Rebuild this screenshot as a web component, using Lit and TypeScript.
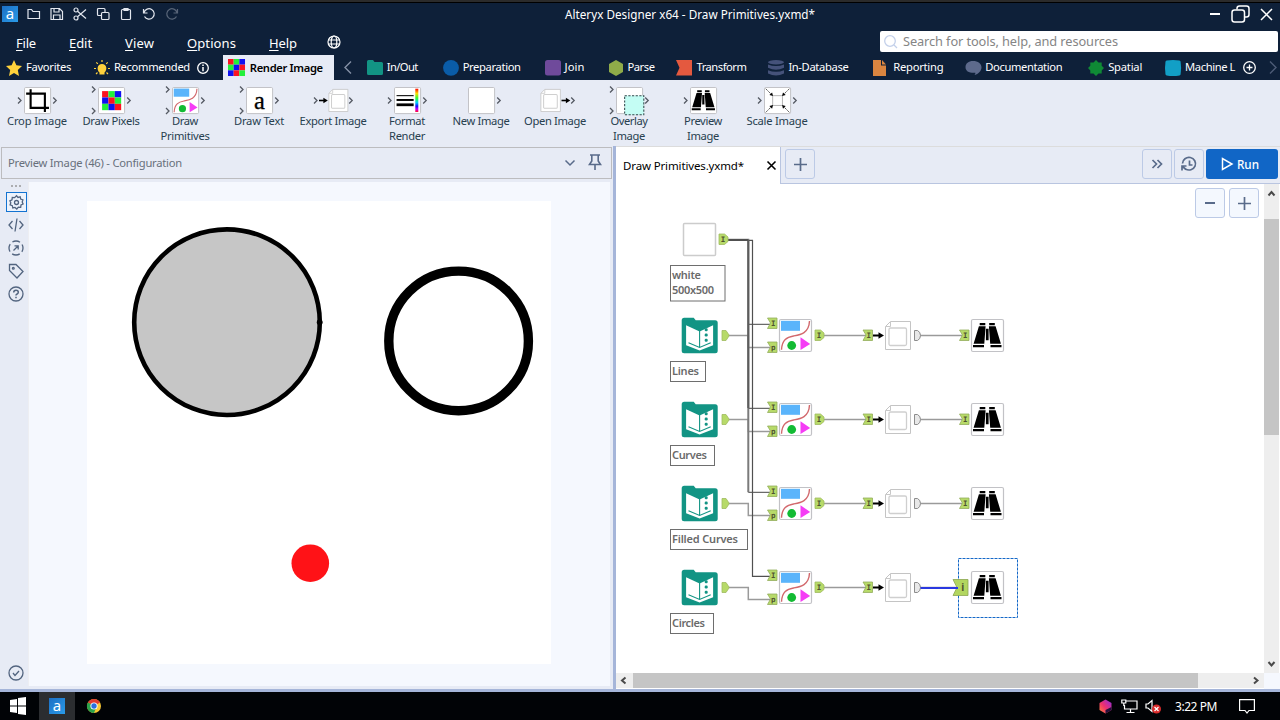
import { LitElement, html, svg, css } from "lit";
import { customElement, property } from "lit/decorators.js";

/** One line of text tracked out or in to a nominal width. */
@customElement("tracked-text")
export class TrackedText extends LitElement {
  @property({ type: Number }) w = 0;
  @property() text = "";
  @property({ type: Boolean }) mnemonic = false;
  static styles = css`
    :host { display: inline-block; white-space: pre; flex: none; }
    u { text-underline-offset: 2px; text-decoration-thickness: 1px; }
  `;
  render() {
    return html`<span>${this.mnemonic
      ? html`<u>${this.text[0]}</u>${this.text.slice(1)}`
      : this.text}</span>`;
  }
  updated() {
    const span = this.renderRoot.querySelector("span") as HTMLElement;
    span.style.letterSpacing = "0";
    const natural = span.getBoundingClientRect().width;
    span.style.letterSpacing = `${(this.w - natural) / this.text.length}px`;
  }
}

const t = (text: string, w: number, mnemonic = false) =>
  html`<tracked-text .text=${text} .w=${w} ?mnemonic=${mnemonic}></tracked-text>`;

// ---- Tool glyphs, drawn in a 33 x 33 frame ----
const frame = svg`<rect x=".5" y=".5" width="32" height="32" rx="1.5" fill="#fff" stroke="#c2c2c6" stroke-width="1.2"/>`;
const binoculars = svg`${frame}
  <path d="M8.7 3.900h5.600v2.300h-5.600zM18.200 3.900h5.600v2.300h-5.600zM7.900 7.300h6.700L13.300 24.800H2.600zM24.600 7.300h-6.700L19.200 24.800h10.700zM2 26h11v2.300H2zM19.500 26h11v2.300h-11zM14.900 9.700h2.700v11.600h-2.700z" fill="#000"/>`;
const primitives = svg`${frame}
  <rect x="2" y="1.8" width="19" height="10" fill="#5ab4fb"/>
  <path d="M2.500 30.800C3 20.500 8 18.200 14.500 17S30 14.500 30.500 2" fill="none" stroke="#d2686c" stroke-width="1.4"/>
  <circle cx="12.700" cy="26.500" r="4.400" fill="#12bb33"/><path d="M21.500 18.200l9.700 6.800-9.700 6z" fill="#f53cf5"/>`;
const pixelCells = ["#fa1420", "#22f03a", "#1010f0", "#1010f0", "#fa1420", "#22f03a", "#22f03a", "#1010f0", "#fa1420"];
const tabCells = ["#fa1420", "#22f03a", "#1010f0", "#22f03a", "#1010f0", "#fa1420", "#1010f0", "#fa1420", "#22f03a"];
const pixels = (x: number, y: number, s: number, cells = pixelCells) =>
  cells.map((c, i) => svg`<rect x=${x + (i % 3) * s} y=${y + Math.floor(i / 3) * s} width=${s} height=${s} fill=${c}/>`);
const page = svg`<path d="M5.500 .5H25.500V28.500H.5V5.500Z" fill="#fff" stroke="#c4c4c4"/>
  <path d="M.8 5.500H5.500V.8" fill="none" stroke="#c8c8c8"/>
  <rect x="4" y="7" width="17.500" height="17.500" rx="1.500" fill="#fff" stroke="#cfcfcf" stroke-width="1.300"/>`;
const arrow = svg`<path d="M0 0H6.500" stroke="#000" stroke-width="2"/><path d="M5.500-3.300L11 0 5.500 3.300z" fill="#000"/>`;
const book = svg`<path d="M2.500 0H12l2 2.500H33.500q2.500 0 2.500 2.500V33q0 2.500-2.500 2.500H2.500Q0 35.500 0 33V2.500Q0 0 2.500 0z" fill="#129484"/>
  <path d="M4.400 7.500L17.900 13.800 31.400 7.500V27.500L17.900 32.700 4.400 27.500z" fill="#fff"/>
  <path d="M17.900 13.300V29.500M6.800 25L17.900 29.800 29 25" stroke="#129484" stroke-width="1.100" fill="none"/>
  <g fill="#129484"><rect x="23" y="10.500" width="3" height="3" rx="1.200"/><rect x="23" y="15.800" width="3" height="3" rx="1.200"/><rect x="23" y="21" width="3" height="3" rx="1.200"/></g>`;

const glyphs: Record<string, unknown> = {
  crop: svg`${frame}<path d="M8 2.500V25.500H30.500M2.500 8H25.500V30.500" fill="none" stroke="#000" stroke-width="2.600"/>`,
  pixels: svg`${frame}${pixels(4.900, 4.900, 7.800)}`,
  primitives,
  text: svg`${frame}<text x="16.300" y="26.300" text-anchor="middle" class="glyph-a">a</text>`,
  format: svg`${frame}<defs><linearGradient id="spectrum" x1="0" y1="0" x2="0" y2="1"><stop offset="0" stop-color="#f00"/><stop offset=".2" stop-color="#fd0"/><stop offset=".4" stop-color="#3f3"/><stop offset=".6" stop-color="#0cf"/><stop offset=".75" stop-color="#11f"/><stop offset=".88" stop-color="#c0f"/><stop offset="1" stop-color="#f02"/></linearGradient></defs>
    <path d="M3 10.500H24" stroke="#000" stroke-width="1.300"/><path d="M3 15.800H24" stroke="#000" stroke-width="2.400"/><path d="M3 21.700H24" stroke="#000" stroke-width="3.400"/><rect x="26" y="2" width="3.700" height="28.500" fill="url(#spectrum)"/>`,
  blank: frame,
  overlay: svg`${frame}<rect x="10.500" y="10.500" width="23.500" height="23.500" fill="#c4fdf4" stroke="#33484c" stroke-width="1.300" stroke-dasharray="2.700 1.800"/>`,
  binoculars,
  scale: svg`${frame}<rect x="10.500" y="10.500" width="12" height="12" fill="none" stroke="#b5b5b5" stroke-width="1.200"/>
    <path d="M2 2l7 7M31 2l-7 7M2 31l7-7M31 31l-7-7" stroke="#444" stroke-width="1.200" stroke-dasharray="2 1"/>
    <path d="M11 11L6.500 9.800 9.800 6.500zM22 11l4.500-1.200-3.300-3.300zM11 22l-4.500 1.200 3.300 3.300zM22 22l4.500 1.200-3.300 3.300z" fill="#000"/>`,
};

const chev = (x: number, y: number) => svg`<path d="M${x} ${y - 3}l3 3-3 3" fill="none" stroke="#555a63" stroke-width="1.300"/>`;

interface Tool { glyph: string; ins: number; outs: number; lines: [string, number][]; }
const tools: Tool[] = [
  { glyph: "crop", ins: 1, outs: 1, lines: [["Crop Image", 60]] },
  { glyph: "pixels", ins: 2, outs: 1, lines: [["Draw Pixels", 57]] },
  { glyph: "primitives", ins: 2, outs: 1, lines: [["Draw", 26], ["Primitives", 49]] },
  { glyph: "text", ins: 2, outs: 1, lines: [["Draw Text", 50]] },
  { glyph: "export", ins: 1, outs: 1, lines: [["Export Image", 67]] },
  { glyph: "format", ins: 1, outs: 1, lines: [["Format", 36], ["Render", 36]] },
  { glyph: "blank", ins: 0, outs: 1, lines: [["New Image", 57]] },
  { glyph: "open", ins: 0, outs: 1, lines: [["Open Image", 62]] },
  { glyph: "overlay", ins: 2, outs: 1, lines: [["Overlay", 37], ["Image", 32]] },
  { glyph: "binoculars", ins: 1, outs: 0, lines: [["Preview", 38], ["Image", 32]] },
  { glyph: "scale", ins: 1, outs: 1, lines: [["Scale Image", 61]] },
];

const toolArt = (tool: Tool) => {
  let body;
  if (tool.glyph === "export") {
    body = svg`<g transform="translate(23 20.500) scale(.8)">${arrow}</g><g transform="translate(32.500 9) scale(.76 .79)">${page}</g>`;
  } else if (tool.glyph === "open") {
    body = svg`<g transform="translate(22.500 9) scale(.78 .79)">${page}</g><g transform="translate(43.500 20.500) scale(.8)">${arrow}</g>`;
  } else {
    body = svg`<g transform="translate(24.100 7.100) scale(.815)">${glyphs[tool.glyph]}</g>`;
  }
  return html`<svg width="74" height="34" viewBox="0 0 74 34">
    ${body}
    ${tool.ins === 1 ? chev(18, 20.500) : ""}
    ${tool.ins === 2 ? svg`${chev(18, 9.500)}${chev(18, 31)}` : ""}
    ${tool.outs ? chev(53.200, 20.500) : ""}
  </svg>`;
};

// ---- Category tabs: icon, label width, total cell width ----
interface Cat { id: string; label: string; w: number; cell: number; icon: unknown; }
const cats: Cat[] = [
  { id: "io", label: "In/Out", w: 31, cell: 76, icon: svg`<path d="M0 1.500Q0 0 1.500 0H6l1.500 2H14.500Q16 2 16 3.500V13.500Q16 15 14.500 15H1.500Q0 15 0 13.500z" fill="#129484"/>` },
  { id: "prep", label: "Preparation", w: 58, cell: 102, icon: svg`<circle cx="8" cy="7.800" r="7.900" fill="#0a5ca8"/>` },
  { id: "join", label: "Join", w: 20, cell: 63, icon: svg`<rect width="16" height="15.500" rx="2.500" fill="#6f4a9b"/>` },
  { id: "parse", label: "Parse", w: 27, cell: 69, icon: svg`<path d="M8 0l7 4v8l-7 4-7-4V4z" fill="#8fab49"/>` },
  { id: "transform", label: "Transform", w: 50, cell: 92, icon: svg`<path d="M0 0H16V15.500H0L3.500 7.700z" fill="#e4593f"/>` },
  { id: "indb", label: "In-Database", w: 60, cell: 105, icon: svg`<g fill="#45527a"><ellipse cx="8" cy="2.200" rx="8" ry="2.200"/><path d="M0 4.500q8 3 16 0v3.300q-8 4-16 0zM0 10.300q8 3 16 0v3.200q-8 4-16 0z"/></g>` },
  { id: "rep", label: "Reporting", w: 50, cell: 92, icon: svg`<path d="M0 0H8V5.500H13V16H0z" fill="#da8540"/><path d="M9 0l4 4.500H9z" fill="#da8540"/>` },
  { id: "doc", label: "Documentation", w: 77, cell: 123, icon: svg`<path d="M8 1c5 0 8.500 2.500 8.500 6.300 0 3.200-2.300 6.400-7 7.700.8-.8 1-1.600.8-2.200C4 13.200.500 11 .5 7.200.5 3.500 3.500 1 8 1z" fill="#5d6a8c"/>` },
  { id: "spatial", label: "Spatial", w: 34, cell: 77, icon: svg`<path d="M8 0l2.500 2.500h3.200v3.200L16 8l-2.300 2.500v3h-3.200L8 16l-2.500-2.500H2.300v-3L0 8l2.300-2.300V2.500h3.200z" fill="#0f8a35"/>` },
  { id: "ml", label: "Machine L", w: 50, cell: 78, icon: svg`<path d="M1.500.5Q8-.6 14.500.5L15.600 1.500Q16.600 8 15.600 14.500L14.500 15.500Q8 16.600 1.500 15.500L.5 14.500Q-.5 8 .5 1.500z" fill="#129fc6"/>` },
];

const quick = [
  svg`<path d="M2 3.500h3.500l1.500 2h6.500v7H2z"/>`,
  svg`<path d="M2 2.500h8.500l3 3V13.500H2zM5 2.500v3.500h5V2.500M4.500 13.500V9h6.500v4.500"/>`,
  svg`<circle cx="4" cy="4" r="2"/><circle cx="4" cy="12" r="2"/><path d="M5.500 5.300L14 12.500M5.500 10.700L14 3.500"/>`,
  svg`<rect x="2.500" y="2.500" width="7.500" height="7" rx="1"/><rect x="6.500" y="6.500" width="7.500" height="7" rx="1" fill="#0e2039"/>`,
  svg`<rect x="3.500" y="3.500" width="9" height="10" rx="1"/><path d="M6 4.500V2.500h4v2z"/>`,
  svg`<path d="M2.500 3v4h4M3 6.500a5.200 5.200 0 1 1 .5 4"/>`,
  svg`<path d="M13.500 3v4h-4M13 6.500a5.200 5.200 0 1 0-.5 4" opacity=".35"/>`,
];

// ---- Workflow canvas ----
const rows = [
  { y: 335, name: "Lines", w: 35, tw: 27 },
  { y: 419, name: "Curves", w: 44, tw: 35 },
  { y: 503, name: "Filled Curves", w: 77, tw: 66 },
  { y: 587, name: "Circles", w: 43, tw: 33 },
];
const inPort = (x: number, y: number, label: string) => svg`<g transform="translate(${x} ${y})">
  <path d="M.5-5H10V5.500H.5L3.500 0z" fill="#b7da69" stroke="#93ad5c" stroke-width=".8"/><text x="6.300" y="3.200" class="port">${label}</text></g>`;
const outPort = (x: number, y: number, label: string) => svg`<g transform="translate(${x} ${y})">
  <path d="M.5-5H6L9.500-2V2.500L6 5.500H.5z" fill="#b7da69" stroke="#a0bb60" stroke-width=".8"/><text x="4.500" y="3" class="port">${label}</text></g>`;
const note = (x: number, y: number, w: number, h: number, lines: [string, number][]) => svg`
  <rect x=${x} y=${y} width=${w} height=${h} fill="#fff" stroke="#6e6e6e"/>
  ${lines.map(([s, tw], i) => svg`<text x=${x + 1.500} y=${y + 13.300 + i * 15} textLength=${tw} class="note">${s}</text>`)}`;

const workflow = () => svg`
  <g fill="none" stroke="#9a9a9a" stroke-width="1.500">
    ${rows.map(r => svg`<path d="M728 ${r.y + .5}H748.300V${r.y + 12.500}H770M824 ${r.y + .5}H866M920 ${r.y + .5}H962"/>`)}
  </g>
  <g fill="none" stroke="#6a6a6a" stroke-width="1.300">
    <path d="M728 239.700H748.300V492.300" stroke="#7b7b7b" stroke-width="2"/>
    <path d="M748.300 324.300H770M748.300 408.300H770M748.300 492.300H770"/>
    <path d="M729 240.300H752.500V576.300H770" stroke="#505050" stroke-width="1.200"/>
    <path d="M748.300 240V408" stroke="#5c5c5c" stroke-width="2"/><path d="M728 240H748" stroke="#505050" stroke-width="2"/>
  </g>
  <rect x="683.500" y="223.500" width="32" height="32" rx="1" fill="#fff" stroke="#ccc" stroke-width="1.500"/>
  ${outPort(718.500, 239, "I")}
  ${note(670.500, 265.500, 54.500, 35.500, [["white", 29], ["500x500", 42]])}
  ${rows.map((r, i) => svg`
    <g transform="translate(681.700 ${r.y - 17.300})">${book}</g>
    <path d="M722 ${r.y - 4.500}H726L729 ${r.y}V${r.y + 1}L726 ${r.y + 5.500}H722z" fill="#b7da69" stroke="#a0bb60" stroke-width=".8"/>
    ${note(670.500, r.y + 26.500, r.w, 20, [[r.name, r.tw]])}
    ${inPort(767, r.y - 12, "I")}${inPort(767, r.y + 12, "p")}
    <g transform="translate(779 ${r.y - 16})">${primitives}</g>
    ${outPort(814.500, r.y, "I")}${inPort(862.500, r.y, "I")}
    <g transform="translate(873 ${r.y + .5})">${arrow}</g>
    <g transform="translate(885 ${r.y - 14})">${page}</g>
    <path d="M914.500 ${r.y - 4.500}H917.500Q920.500 ${r.y - 3} 920.500 ${r.y + .5}T917.500 ${r.y + 5.500}H914.500z" fill="#e8e8e8" stroke="#8c8c8c"/>
    ${i === 3
      ? svg`<rect x="958.500" y="558.500" width="59" height="59" fill="none" stroke="#1468c8" stroke-dasharray="3 1"/>
        <g transform="translate(953 ${r.y + .5})"><path d="M0-8H15V8H0L4 0z" fill="#b2d65f" stroke="#8ca650" stroke-width=".8"/><text x="9.700" y="3.800" class="port big">i</text></g>
        <path d="M920.500 588H958" stroke="#2a38e0" stroke-width="2"/>`
      : inPort(959, r.y, "I")}
    <g transform="translate(971 ${r.y - 16})">${binoculars}</g>`)}`;

@customElement("app-root")
export class AppRoot extends LitElement {
  static styles = css`
    :host { display: flex; flex-direction: column; width: 1280px; height: 720px; overflow: hidden;
      font-family: "Noto Sans", "Open Sans", sans-serif; font-size: 11.2px; color: #fff; background: #e7ebf5; box-sizing: border-box; }
    * { box-sizing: border-box; }
    svg { display: block; flex: none; overflow: visible; }
    .title { display: grid; grid-template-columns: 565px 1fr auto; align-items: center; height: 30px; padding-bottom: 4px; border-top: 2px solid #2b2b2b; background: #0e2039; box-shadow: inset 0 1px #000; font-size: 11.7px; }
    .quick { display: flex; align-items: center; padding-left: 2px; gap: 7px; }
    .quick .strokes { fill: none; stroke: #e2e6ee; stroke-width: 1.2; }
    .logo { width: 16px; height: 16px; background: linear-gradient(135deg, #1c6fc4, #2a9be8); display: grid; place-items: center; font-size: 15px; line-height: 14px; padding-bottom: 3px; }
    .title .logo { margin-right: 1px; }
    .window { display: flex; align-items: center; gap: 11px; padding-right: 8px; }
    .menu { display: flex; height: 25px; background: #0e2039; align-items: flex-start; justify-content: space-between; font-size: 13px; }
    .menu .items { display: flex; padding-left: 16px; height: 25px; padding-top: 1px; align-items: center; }
    .menu .items > * { margin-right: 33px; }
    .menu .items svg { margin: -3px 0 0 -3px; }
    .search { width: 398px; height: 21px; margin: 1px 2px 0 0; background: #fff; border-radius: 2px; color: #858585; display: flex; align-items: center; gap: 6px; padding: 0 0 1px 4px; line-height: 18px; font-size: 12.8px; }
    .search tracked-text { margin-bottom: 1px; }
    .tabs { display: flex; height: 25px; background: #0e2039; align-items: center; padding-left: 6px; }
    .tabs .fav { width: 88px; }
    .tabs .rec { width: 129px; }
    .cell { display: flex; align-items: center; gap: 4px; }
    .cell tracked-text { margin-bottom: 2px; }
    .cell .info { margin-left: 3px; }
    .active { width: 111px; height: 25px; background: #e7ebf5; color: #000; font-weight: 600; padding: 0 0 0 5px; gap: 5px; margin-right: 10px; }
    .active tracked-text { margin-bottom: 0; }
    .left-chev { width: 23px; }
    .ribbon { display: grid; grid-template-columns: repeat(11, 74px); height: 66px; background: #e7ebf5; color: #28404f; flex: none; column-gap: 0; }
    .tool { display: flex; flex-direction: column; align-items: center; line-height: 14px; }
    .tool.two { line-height: 14.5px; }
    .glyph-a { font: 400 30px "Liberation Serif", serif; fill: #000; stroke: #000; stroke-width: .4; }
    .main { display: flex; height: 543px; flex: none; }
    .config { width: 613px; display: flex; flex-direction: column; padding: 1px 1px 0 1px; background: #e7ebf5; }
    .config-head { height: 32px; border: 1px solid #bcbcbf; display: flex; align-items: center; padding: 0 0 1px 6px; color: #68707b; flex: none; }
    .config-head .tools { margin-left: auto; display: flex; gap: 12px; padding-right: 9px; align-items: center; }
    .config-body { flex: 1; display: flex; padding: 3px 2px 3px 3px; }
    .rail { width: 25px; display: flex; flex-direction: column; align-items: center; padding-top: 2px; border-right: 1px solid #edeef2; }
    .rail svg { fill: none; stroke: #52647f; stroke-width: 1.3; }
    .rail .sel { border: 1px solid #1373d1; width: 21px; height: 20px; display: grid; place-items: center; margin: 4px 0 5px; background: #edf3fc; }
    .rail svg.gap { margin-bottom: 7px; }
    .rail .end { margin-top: auto; margin-bottom: 5px; }
    .preview { flex: 1; background: #f5f8fe; padding: 19px 0 0 58px; }
    .paper { width: 464px; height: 463px; background: #fff; display: block; }
    .divider { width: 3px; background: #a5b5d9; }
    .work { flex: 1; display: flex; flex-direction: column; background: #fff; }
    .docs { height: 38px; display: flex; align-items: flex-start; background: #e7ebf5; border-bottom: 1px solid #b9c5e0; border-top: 1px solid #dcdcdc; flex: none; }
    .doc-tab { width: 165px; height: 38px; background: #fff; color: #000; display: flex; align-items: center; justify-content: space-between; padding: 0 4px 2px 7px; border-right: 1px solid #b9c5e0; font-size: 11.5px; }
    .btn { width: 30px; height: 30px; border: 1px solid #bccae6; border-radius: 3px; display: grid; place-items: center; }
    .btn svg { fill: none; stroke: #596b8a; stroke-width: 1.7; }
    .docs .btn { margin-top: 2px; }
    .docs .add { margin-left: 4px; }
    .docs .right { margin-left: auto; display: flex; gap: 2px; padding-right: 2px; }
    .run { margin-top: 2px; width: 72px; height: 30px; background: #1166c6; border-radius: 3px; display: flex; align-items: center; padding-left: 15px; gap: 3px; font-size: 11.7px; font-weight: 500; }
    .stage { flex: 1; display: grid; grid-template-columns: 648px 16px; grid-template-rows: 489px 16px; }
    .canvas { position: relative; background: #fff; }
    .zoom { position: absolute; top: 4px; right: 5px; display: flex; gap: 4px; }
    .zoom .btn { background: #f4f8fe; }
    .vbar { background: #eee; display: flex; flex-direction: column; justify-content: space-between; margin-right: 1px; }
    .vbar .thumb { height: 216px; background: #c5c5c5; margin-bottom: auto; }
    .vbar svg, .hbar svg { fill: none; stroke: #4a4a4a; stroke-width: 2; }
    .hbar { background: #eee; display: flex; height: 15px; }
    .hbar .thumb { width: 565px; background: #c5c5c5; margin-right: auto; }
    .corner { background: #f5f8fe; }
    .port { font: bold 7.5px "DejaVu Sans Mono", monospace; text-anchor: middle; fill: #4f5230; }
    .port.big { font: bold 10px "Noto Sans", sans-serif; }
    .note { font: 600 11px "Noto Sans", sans-serif; fill: #6a6a6a; }
    .edge { height: 3px; background: #a5b5d9; flex: none; }
    .taskbar { height: 28px; background: #010306; display: flex; align-items: stretch; }
    .taskbar .start { width: 39px; display: grid; place-items: center; padding-right: 3px; }
    .taskbar .app { width: 36px; display: grid; place-items: center; background: #2b2d30; }
    .taskbar .chrome { width: 38px; display: grid; place-items: center; }
    .tray { margin-left: auto; display: flex; align-items: center; font-size: 12px; padding-right: 25px; }
    .tray .a { margin-right: 9px; } .tray .b { margin-right: 7px; } .tray .c { margin-right: 13px; } .tray .d { margin-left: 22px; }
  `;

  render() {
    return html`
      <div class="title">
        <div class="quick">
          <div class="logo">a</div>
          ${quick.map(q => html`<svg class="strokes" width="16" height="16" viewBox="0 0 16 16">${q}</svg>`)}
        </div>
        ${t("Alteryx Designer x64 - Draw Primitives.yxmd*", 250)}
        <div class="window">
          <svg width="10" height="16"><path d="M0 8H10" stroke="#fff" stroke-width="2"/></svg>
          <svg width="19" height="18" fill="none" stroke="#fff" stroke-width="1.500"><rect x="1" y="5" width="12.500" height="12" rx="2.500"/><path d="M6 4.500V3.500Q6 1 8.500 1H15.500Q18 1 18 3.500V9.500Q18 12 15.500 12H14"/></svg>
          <svg width="11" height="11" stroke="#fff" stroke-width="1.500"><path d="M0 0L11 11M11 0L0 11"/></svg>
        </div>
      </div>
      <div class="menu">
        <div class="items">
          ${t("File", 20, true)}${t("Edit", 23, true)}${t("View", 29, true)}${t("Options", 49, true)}${t("Help", 28, true)}
          <svg width="14" height="14" fill="none" stroke="#fff" stroke-width="1.200"><circle cx="7" cy="7" r="6"/><ellipse cx="7" cy="7" rx="2.800" ry="6"/><path d="M1.500 5H12.500M1.500 9H12.500"/></svg>
        </div>
        <div class="search">
          <svg width="13" height="13" fill="none" stroke="#c3d0ea" stroke-width="1.300"><circle cx="6" cy="6" r="5.300"/><path d="M10 10l3 3"/></svg>
          ${t("Search for tools, help, and resources", 215)}
        </div>
      </div>
      <div class="tabs">
        <div class="cell fav"><svg width="16" height="16"><path d="M8 0l2.400 5.300 5.600.7-4.200 4 1.200 6L8 13l-5 3 1.200-6L0 6l5.600-.7z" fill="#ffd23c"/></svg>${t("Favorites", 45)}</div>
        <div class="cell rec"><svg width="16" height="16"><path d="M5.500 12.500C2.500 10 3 4 8 4s5.500 6 2.500 8.500v2h-5z" fill="#ffd23c"/><path d="M8 0v2M2.300 2.300l1.500 1.500M13.700 2.300l-1.500 1.500M0 8.500h2M16 8.500h-2M2 14l1.500-1.500M14 14l-1.500-1.500" stroke="#ffd23c" stroke-width="1.200"/></svg>${t("Recommended", 76)}
          <svg class="info" width="12" height="12"><circle cx="6" cy="6" r="5.300" fill="none" stroke="#fff" stroke-width="1.300"/><path d="M6 5v4.200M6 2.600v1.400" stroke="#fff" stroke-width="1.500"/></svg></div>
        <div class="cell active"><svg width="17" height="17">${pixels(0, 0, 5.670, ["#fa1420", "#22f03a", "#1010f0", "#22f03a", "#1010f0", "#fa1420", "#1010f0", "#fa1420", "#22f03a"])}</svg>${t("Render Image", 73)}</div>
        <div class="left-chev"><svg width="8" height="13"><path d="M7 .5L1 6.500l6 6" fill="none" stroke="#8490a6" stroke-width="1.400"/></svg></div>
        ${cats.map(c => html`<div class="cell" style="width:${c.cell}px"><svg width="16" height="16">${c.icon}</svg>${t(c.label, c.w)}</div>`)}
        <svg width="13" height="13" fill="none" stroke="#fff" stroke-width="1.300"><circle cx="6.500" cy="6.500" r="5.800"/><path d="M6.500 3.500v6M3.500 6.500h6"/></svg>
        <svg width="24" height="13"><path d="M14 .5l6 6-6 6" fill="none" stroke="#4d5b76" stroke-width="1.400"/></svg>
      </div>
      <div class="ribbon">
        ${tools.map(tool => html`<div class="tool ${tool.lines.length > 1 ? "two" : ""}">${toolArt(tool)}${tool.lines.map(([s, n]) => t(s, n))}</div>`)}
      </div>
      <div class="main">
        <div class="config">
          <div class="config-head">
            ${t("Preview Image (46) - Configuration", 174)}
            <div class="tools">
              <svg width="12" height="8"><path d="M1.500 1.500L6 6l4.500-4.500" fill="none" stroke="#596b8a" stroke-width="1.500"/></svg>
              <svg width="14" height="17"><path d="M2 1H12M3.800 1.500V7L1.500 10.500H12.500L10.200 7V1.500M7 10.500V16" fill="none" stroke="#596b8a" stroke-width="1.600"/></svg>
            </div>
          </div>
          <div class="config-body">
            <div class="rail">
              <svg width="12" height="4"><path d="M1 2h2M5 2h2M9 2h2" stroke="#999"/></svg>
              <div class="sel"><svg width="15" height="15"><circle cx="7.500" cy="7.500" r="2"/><path d="M7.500.8l1.500 1.700 2.200-.6.500 2.200 2.200.8-.7 2.100.9 2-2.100 1-.3 2.300-2.300-.2-1.600 1.900-1.800-1.600-2.200.5-.5-2.200-2.200-.9.700-2.100-.9-1.900 2.100-1 .3-2.300 2.300.2z"/></svg></div>
              <svg class="gap" width="16" height="16"><path d="M4.500 4L1 8l3.500 4M11.500 4L15 8l-3.500 4M9 1.500L7 14.500"/></svg>
              <svg class="gap" width="16" height="16"><circle cx="8" cy="8" r="7" stroke-dasharray="8 3" stroke-dashoffset="4"/><path d="M5.500 10.500l4.500-4.500M6.500 5.800h3.700V9.500"/></svg>
              <svg class="gap" width="16" height="16"><path d="M1.500 1.500H8L15 8.500 9 15 1.500 7.500z"/><circle cx="5.300" cy="5.300" r=".9"/></svg>
              <svg class="gap" width="16" height="16"><circle cx="8" cy="8" r="7"/><path d="M5.700 6.500q0-2.300 2.300-2.300t2.300 2q0 1.300-1.500 2Q8 8.600 8 9.500M8 10.800v1.500" stroke-width="1.500"/></svg>
              <svg class="end" width="16" height="16"><circle cx="8" cy="8" r="7"/><path d="M5 8l2 2.500 4-4.500"/></svg>
            </div>
            <div class="preview">
              <svg class="paper" viewBox="87 201 464 463">
                <circle cx="227" cy="322.200" r="92.800" fill="#c6c6c6" stroke="#000" stroke-width="4.600"/>
                <circle cx="319.700" cy="322.200" r="2.900"/>
                <circle cx="458.600" cy="340.900" r="69.800" fill="#fff" stroke="#000" stroke-width="9.400"/>
                <circle cx="310.300" cy="563.200" r="18.800" fill="#ff1217"/>
              </svg>
            </div>
          </div>
        </div>
        <div class="divider"></div>
        <div class="work">
          <div class="docs">
            <div class="doc-tab">${t("Draw Primitives.yxmd*", 121)}<svg width="9" height="9"><path d="M.5.5l8 8M8.500.5l-8 8" stroke="#000" stroke-width="1.600"/></svg></div>
            <div class="btn add"><svg width="13" height="13"><path d="M6.500 0v13M0 6.500h13"/></svg></div>
            <div class="right">
              <div class="btn"><svg width="12" height="10"><path d="M1.500 1l4 4-4 4M6.500 1l4 4-4 4"/></svg></div>
              <div class="btn"><svg width="16" height="16"><path d="M1.500 7.500a6.500 6.300 0 1 1 3 5.500M1 14.500v-4.500h4.500M1.500 10.500l3.500 3M8.500 4.500V9h3"/></svg></div>
              <div class="run"><svg width="13" height="14"><path d="M1.500 1.500V12.500L11 7z" fill="none" stroke="#fff" stroke-width="1.500"/></svg>${t("Run", 22)}</div>
            </div>
          </div>
          <div class="stage">
            <div class="canvas">
              <svg width="648" height="489" viewBox="616 184 648 489">${workflow()}</svg>
              <div class="zoom">
                <div class="btn"><svg width="12" height="12"><path d="M1 6h10" stroke-width="2"/></svg></div>
                <div class="btn"><svg width="13" height="13"><path d="M6.500 0v13M0 6.500h13"/></svg></div>
              </div>
            </div>
            <div class="vbar">
              <svg width="15" height="35"><path d="M4.500 11.500l3-3.500 3 3.500"/></svg>
              <div class="thumb"></div>
              <svg width="15" height="16"><path d="M4.500 5l3 3.500 3-3.500"/></svg>
            </div>
            <div class="hbar">
              <svg width="17" height="15"><path d="M9.500 4.500L6 7.500l3.500 3"/></svg>
              <div class="thumb"></div>
              <svg width="17" height="15"><path d="M7 4.500l3.500 3-3.500 3"/></svg>
            </div>
            <div class="corner"></div>
          </div>
        </div>
      </div>
      <div class="edge"></div>
      <div class="taskbar">
        <div class="start"><svg width="16" height="16"><path d="M0 2l7-1v6.500H0zM8-.1L16-1v8.500H8zM0 8.500h7V15l-7-1zM8 8.500h8V17l-8-1z" fill="#fff"/></svg></div>
        <div class="app"><div class="logo">a</div></div>
        <div class="chrome"><svg width="14" height="14"><circle cx="7" cy="7" r="7" fill="#f8c734"/><path d="M7 7L.9 3.500A7 7 0 0 1 13.100 3.500z" fill="#e23b30"/><path d="M.9 3.500A7 7 0 0 0 7 14L9.500 8z" fill="#2ba24c"/><circle cx="7" cy="7" r="3.600" fill="#fff"/><circle cx="7" cy="7" r="2.700" fill="#2a6fe0"/></svg></div>
        <div class="tray">
          <svg class="a" width="13" height="15"><defs><linearGradient id="cube" x1="0" y1="1" x2="1" y2="0"><stop offset="0" stop-color="#ff8a3c"/><stop offset=".45" stop-color="#f0306c"/><stop offset="1" stop-color="#8a2be2"/></linearGradient></defs><path d="M6.500.5l6 3.500v7l-6 3.500-6-3.500V4z" fill="url(#cube)"/><path d="M12.500 8v3l-6 3.500V11z" fill="#21103a"/></svg>
          <svg class="b" width="17" height="15" fill="none" stroke="#fff" stroke-width="1.200"><path d="M5 2H16V10H3.500V6M9.500 10v3.500M5.500 13.500h8"/><path d="M.8 1h4v3h-4zM2.800 4v3"/></svg>
          <svg class="c" width="17" height="15"><path d="M1 5h2l4-3.500v11L3 9H1z" fill="none" stroke="#fff" stroke-width="1.200"/><circle cx="11.500" cy="10" r="4.500" fill="#d92c2c"/><path d="M9.500 8l4 4M13.500 8l-4 4" stroke="#fff" stroke-width="1.200"/></svg>
          ${t("3:22 PM", 42)}
          <svg class="d" width="16" height="16" fill="none" stroke="#fff" stroke-width="1.200"><path d="M.6 1.600H15.400V12.500H10L8 15l-2-2.500H.6z"/></svg>
        </div>
      </div>`;
  }
}
